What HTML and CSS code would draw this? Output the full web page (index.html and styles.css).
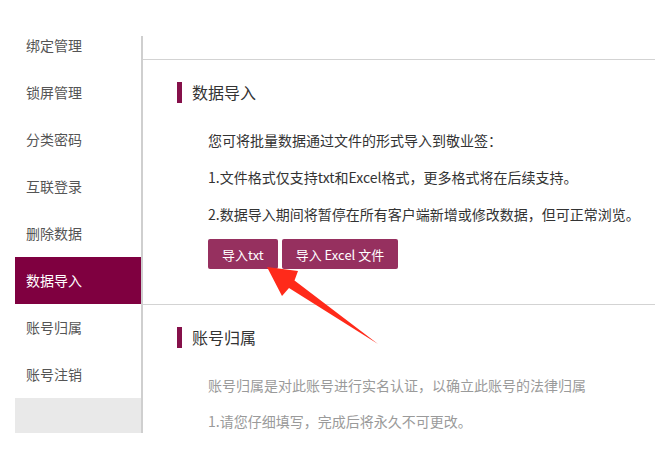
FILE: index.html
```html
<!DOCTYPE html>
<html lang="zh-CN">
<head>
  <meta charset="UTF-8" />
  <meta name="viewport" content="width=device-width, initial-scale=1" />
  <title>数据导入</title>
  <link rel="stylesheet" href="styles.css">
</head>
<body>

  <div class="settings-container">
    <ul class="side-menu">
      <li>绑定管理</li>
      <li>锁屏管理</li>
      <li>分类密码</li>
      <li>互联登录</li>
      <li>删除数据</li>
      <li class="active">数据导入</li>
      <li>账号归属</li>
      <li>账号注销</li>
      <li class="menu-fill"></li>
    </ul>

    <div class="settings-panel">
      <div class="panel-top"></div>

      <section class="panel-section">
        <h2 class="section-title">数据导入</h2>
        <p>您可将批量数据通过文件的形式导入到敬业签：</p>
        <p>1.文件格式仅支持txt和Excel格式，更多格式将在后续支持。</p>
        <p>2.数据导入期间将暂停在所有客户端新增或修改数据，但可正常浏览。</p>
        <div class="button-row">
          <button type="button">导入txt</button>
          <button type="button">导入 Excel 文件</button>
        </div>
      </section>

      <section class="panel-section muted">
        <h2 class="section-title">账号归属</h2>
        <p>账号归属是对此账号进行实名认证，以确立此账号的法律归属</p>
        <p>1.请您仔细填写，完成后将永久不可更改。</p>
      </section>
    </div>
  </div>

  <!-- annotation arrow pointing at the txt button -->
  <svg class="annotation" width="669" height="463" viewBox="0 0 669 463">
    <polygon points="267,267 298,271 294.5,280.5 378,344 289,288 282,296" fill="#ff2a1a" />
  </svg>

</body>
</html>
```

FILE: styles.css
```css
:root {
  --primary: #7f0040;
  --button: #96305f;
  --bar: #85104a;
  --line: #d3d3d3;
  --text: #333;
  --text-menu: #555;
  --text-muted: #9a9a9a;
}

body {
  margin: 0;
  background-color: #fff;
  color: var(--text);
  font-family: "Noto Sans CJK SC", "Noto Sans", sans-serif;
  position: relative;
  width: 669px;
  height: 463px;
  overflow: hidden;
}

.settings-container {
  display: flex;
  padding: 22px 14px 0 15px;
}

.side-menu {
  list-style: none;
  margin: 0;
  padding: 0;
  width: 126px;
  display: flex;
  flex-direction: column;
}

.side-menu li {
  height: 47px;
  line-height: 47px;
  padding-left: 11px;
  font-size: 14px;
  color: var(--text-menu);
}

.side-menu li.active {
  background-color: var(--primary);
  color: #fff;
}

.side-menu li.menu-fill {
  height: 35px;
  background-color: #e9e9e9;
}

.settings-panel {
  flex: 1;
  margin-top: 14px;
  height: 397px;
  border-left: 2px solid #cfcfcf;
}

.panel-top {
  height: 23px;
  border-bottom: 1px solid var(--line);
}

.panel-section {
  padding: 22px 0 35px 34px;
  border-bottom: 1px solid var(--line);
}

.panel-section.muted {
  border-bottom: none;
  padding-bottom: 0;
}

.section-title {
  margin: 0;
  height: 21px;
  line-height: 21px;
  font-size: 16px;
  font-weight: normal;
  color: var(--text);
  border-left: 5px solid var(--bar);
  padding-left: 10px;
}

.panel-section p {
  margin: 17px 0 0 31px;
  line-height: 20px;
  font-size: 14px;
}

.panel-section h2 + p {
  margin-top: 27px;
}

.panel-section.muted p {
  color: var(--text-muted);
  margin-top: 16px;
}

.panel-section.muted h2 + p {
  margin-top: 27px;
}

.button-row {
  display: flex;
  gap: 4px;
  margin: 15px 0 0 31px;
}

.button-row button {
  height: 30px;
  padding: 0 14px;
  border: none;
  border-radius: 2px;
  background-color: var(--button);
  color: #fff;
  font-family: inherit;
  font-size: 13px;
  cursor: pointer;
}

.annotation {
  position: absolute;
  left: 0;
  top: 0;
  pointer-events: none;
}
```
